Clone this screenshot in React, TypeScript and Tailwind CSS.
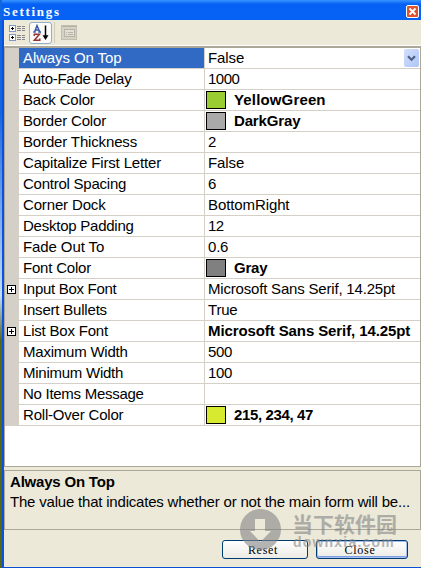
import React from "react";

type Row = {
  label: string;
  labelTrack: string;
  value: string;
  valueTrack: string;
  swatch?: string;
  bold?: boolean;
  expandable?: boolean;
  selected?: boolean;
};

const rows: Row[] = [
  { label: "Always On Top", labelTrack: "tracking-[-0.1px]", value: "False", valueTrack: "tracking-[-0.1px]", selected: true },
  { label: "Auto-Fade Delay", labelTrack: "tracking-[-0.28px]", value: "1000", valueTrack: "tracking-[-0.5px]" },
  { label: "Back Color", labelTrack: "tracking-[-0.17px]", value: "YellowGreen", valueTrack: "tracking-[0.15px]", swatch: "bg-[#9acd32]", bold: true },
  { label: "Border Color", labelTrack: "tracking-[-0.17px]", value: "DarkGray", valueTrack: "tracking-[-0.15px]", swatch: "bg-[#a9a9a9]", bold: true },
  { label: "Border Thickness", labelTrack: "tracking-[-0.15px]", value: "2", valueTrack: "tracking-[-0.35px]" },
  { label: "Capitalize First Letter", labelTrack: "tracking-[-0.16px]", value: "False", valueTrack: "tracking-[-0.1px]" },
  { label: "Control Spacing", labelTrack: "tracking-[-0.24px]", value: "6", valueTrack: "tracking-[-0.35px]" },
  { label: "Corner Dock", labelTrack: "tracking-[-0.15px]", value: "BottomRight", valueTrack: "tracking-[-0.1px]" },
  { label: "Desktop Padding", labelTrack: "tracking-[-0.24px]", value: "12", valueTrack: "tracking-[-0.5px]" },
  { label: "Fade Out To", labelTrack: "tracking-[-0.1px]", value: "0.6", valueTrack: "tracking-[-0.2px]" },
  { label: "Font Color", labelTrack: "tracking-[-0.2px]", value: "Gray", valueTrack: "tracking-[-0.2px]", swatch: "bg-[#808080]", bold: true },
  { label: "Input Box Font", labelTrack: "tracking-[-0.3px]", value: "Microsoft Sans Serif, 14.25pt", valueTrack: "tracking-[-0.19px]", expandable: true },
  { label: "Insert Bullets", labelTrack: "tracking-[-0.2px]", value: "True", valueTrack: "tracking-[-0.2px]" },
  { label: "List Box Font", labelTrack: "tracking-[-0.2px]", value: "Microsoft Sans Serif, 14.25pt", valueTrack: "tracking-[-0.1px]", bold: true, expandable: true },
  { label: "Maximum Width", labelTrack: "tracking-[-0.22px]", value: "500", valueTrack: "tracking-[-0.4px]" },
  { label: "Minimum Width", labelTrack: "tracking-[-0.25px]", value: "100", valueTrack: "tracking-[-0.4px]" },
  { label: "No Items Message", labelTrack: "tracking-[-0.28px]", value: "", valueTrack: "" },
  { label: "Roll-Over Color", labelTrack: "tracking-[-0.2px]", value: "215, 234, 47", valueTrack: "tracking-[-0.37px]", swatch: "bg-[#d7ea2f]", bold: true },
];

function TitleBar() {
  return (
    <div className="flex h-5 shrink-0 items-center justify-between bg-linear-to-b from-[#3995ff] from-0% via-[#0561f3] via-20% to-[#0562f5] pr-0.5 pl-px">
      <span className="mt-1 font-['Liberation_Serif',serif] text-[13px] leading-4 font-bold tracking-[1.7px] text-white">
        Settings
      </span>
      <svg className="mt-0.5 h-[13px] w-[13px]" viewBox="0 0 13 13" aria-label="Close window">
        <rect x="0.5" y="0.5" width="12" height="12" rx="1.5" fill="#e0532f" stroke="#fff" />
        <path d="M3.5 3.5 9.5 9.5M9.5 3.5 3.5 9.5" stroke="#fff" strokeWidth="1.9" />
      </svg>
    </div>
  );
}

function Toolbar() {
  return (
    <div className="flex h-[26px] shrink-0 border-b border-white bg-[#ece9d8] pl-[5px] pt-0.5">
      <svg className="mt-[3px] h-4 w-[17px]" viewBox="0 0 17 16" shapeRendering="crispEdges" aria-label="Categorized">
        {[0, 9].map((y) => (
          <g key={y}>
            <rect x="0.5" y={y + 0.5} width="6" height="6" rx="1" fill="#fff" stroke="#7f98c4" />
            <path d={`M2 ${y + 3.5}h3M3.5 ${y + 2}v3`} stroke="#000" />
            <path d={`M8 ${y + 1.5}h8M8 ${y + 3.5}h8M8 ${y + 5.5}h8`} stroke="#85858c" strokeDasharray="4 1 3 1" />
          </g>
        ))}
      </svg>
      <div className="ml-[3px] flex h-[22px] w-[23px] items-center justify-center rounded-[3px] border border-[#93aec5] bg-[#fbfbfa]">
        <svg className="h-[18px] w-[18px]" viewBox="0 0 18 18" aria-label="Alphabetical">
          <path d="M2.5 8 5 1.5 7.8 8M3.2 6h4M1.3 8h2.4M6.3 8h2.7" fill="none" stroke="#3257a8" strokeWidth="1.4" />
          <path d="M2.3 12v-1.8h5.2L2.3 16.3h5.5v-1.8" fill="none" stroke="#983333" strokeWidth="1.5" />
          <path d="M13.5 1.5v12" stroke="#000" strokeWidth="1.5" />
          <path d="M10.5 11.2h6L13.5 16z" fill="#000" />
        </svg>
      </div>
      <div className="ml-[2px] h-[21px] w-px bg-[#d0ccba]" />
      <svg className="mt-[3px] ml-[6px] h-[15px] w-4" viewBox="0 0 16 15" shapeRendering="crispEdges" aria-label="Property pages">
        <rect x="0.5" y="0.5" width="15" height="14" fill="#d5d2c4" stroke="#c1beb0" />
        <path d="M1 1.5h14" stroke="#b5b2a7" />
        <rect x="3.5" y="4.5" width="10" height="7" fill="#e3e0d3" stroke="#b5b2a7" />
        <path d="M5 7.5h1M7 7.5h5M5 9.5h1M7 9.5h5" stroke="#b5b2a7" />
      </svg>
    </div>
  );
}

function PropertyRow({ row }: { row: Row }) {
  return (
    <div className="flex h-[21px] text-[15px] leading-5">
      <div className="flex w-[14px] shrink-0 items-center justify-center bg-[#d4d0c8]">
        {row.expandable && (
          <svg className="mr-px mb-px h-[9px] w-[9px]" viewBox="0 0 9 9" shapeRendering="crispEdges">
            <rect x="0.5" y="0.5" width="8" height="8" fill="#fff" stroke="#000" />
            <path d="M2 4.5h5M4.5 2v5" stroke="#000" />
          </svg>
        )}
      </div>
      <div
        className={`w-[185px] shrink-0 border-b border-[#d4d0c8] pl-1 whitespace-nowrap ${row.labelTrack} ${
          row.selected ? "bg-[#316ac5] text-white" : "bg-white text-black"
        }`}
      >
        {row.label}
      </div>
      <div className="flex min-w-0 flex-1 border-b border-l border-[#d4d0c8] bg-white">
        {row.swatch && <span className={`mt-px ml-px h-[18px] w-5 shrink-0 border border-black ${row.swatch}`} />}
        <span
          className={`whitespace-nowrap ${row.valueTrack} ${row.swatch ? "ml-2" : "ml-[3px]"} ${
            row.bold ? "font-bold" : ""
          }`}
        >
          {row.value}
        </span>
        {row.selected && (
          <span className="mt-px mr-px ml-auto flex h-[18px] w-[15px] items-center justify-center rounded-[2px] bg-linear-to-br from-[#d3e0fd] to-[#afc5f6]">
            <svg className="h-[7px] w-[9px]" viewBox="0 0 9 7">
              <path d="M1 1.2 4.5 4.7 8 1.2" fill="none" stroke="#4d6185" strokeWidth="2.2" />
            </svg>
          </span>
        )}
      </div>
    </div>
  );
}

function Watermark() {
  return (
    <div className="pointer-events-none absolute top-[509px] left-[240px] flex text-[#858585] opacity-60">
      <svg className="h-[41px] w-[41px]" viewBox="0 0 41 41">
        <path
          fillRule="evenodd"
          fill="currentColor"
          d="M20.5 0a20.5 20.5 0 1 0 0 41a20.5 20.5 0 1 0 0-41zM15 10h10v12h6L20.5 33 10 22h5z"
        />
      </svg>
      <div className="ml-[11px] whitespace-nowrap">
        <div className="mt-[3px] font-['Noto_Sans_CJK_SC',sans-serif] text-[21px] leading-[22px] font-bold">当下软件园</div>
        <div className="ml-px font-['Liberation_Sans',sans-serif] text-[14px] leading-4 font-bold tracking-[1.2px]">downxia.com</div>
      </div>
    </div>
  );
}

export default function App() {
  return (
    <div className="relative flex h-[568px] w-[421px] overflow-hidden bg-[#ece9d8] font-['Liberation_Sans',Arial,sans-serif]">
      <div className="w-[2px] shrink-0 bg-linear-to-b from-[#1267dc] from-20% via-[#c5dcf5] via-52% to-[#536818] to-60%" />
      <div className="flex min-w-0 flex-1 flex-col border-b border-[#0b4fd6]">
        <TitleBar />
        <div className="flex min-h-0 flex-1 flex-col border-l-2 border-[#0b50e0]">
          <Toolbar />
          <div className="flex h-[421px] shrink-0 flex-col border border-t-2 border-[#aca899] bg-white">
            {rows.map((row) => (
              <PropertyRow key={row.label} row={row} />
            ))}
          </div>
          <div className="mt-[3px] h-[60px] shrink-0 border border-[#aca899] pt-px pl-[5px] text-[15px] leading-[20px] whitespace-nowrap text-black">
            <div className="font-bold tracking-[-0.2px]">Always On Top</div>
            <div className="tracking-[-0.2px]">The value that indicates whether or not the main form will be...</div>
          </div>
          <div className="mt-[10px] flex justify-end gap-2 pr-[13px] font-['Liberation_Serif',serif] text-[12px] leading-4 tracking-[0.7px] text-black">
            <button className="h-[19px] w-[86px] rounded-[3px] border border-[#003c74] bg-linear-to-b from-white to-[#ecebe5] pr-1 leading-4">
              Reset
            </button>
            <button className="h-[19px] w-[92px] rounded-[3px] border border-[#003c74] bg-linear-to-b from-white to-[#ecebe5] pr-1 leading-4 shadow-[inset_0_0_0_1px_#a5bff0,inset_0_-2px_0_#7f9fe5]">
              Close
            </button>
          </div>
        </div>
      </div>
      <Watermark />
    </div>
  );
}
